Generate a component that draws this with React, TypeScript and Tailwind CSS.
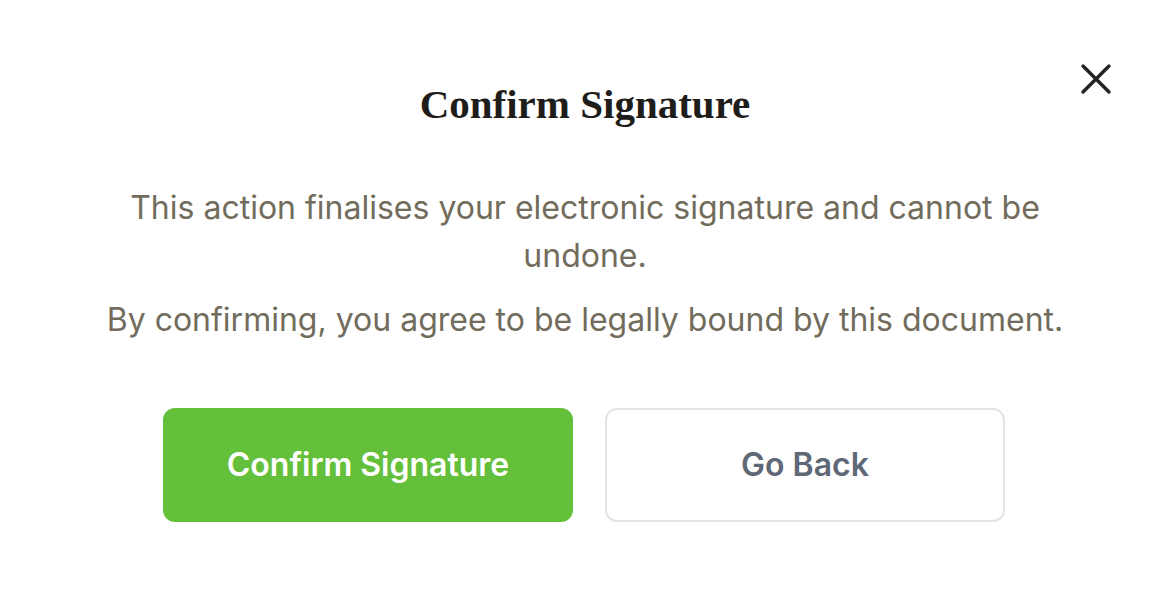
import { useState } from "react";

const CloseIcon = () => (
  <svg width="32" height="32" viewBox="0 0 32 32" fill="none">
    <path
      d="M3 3L29 29M29 3L3 29"
      stroke="#222222"
      strokeWidth="3.4"
      strokeLinecap="round"
    />
  </svg>
);

const App = () => {
  const [open, setOpen] = useState(true);

  return (
    <div className="relative w-full h-[592px] bg-white font-['Inter','Noto_Sans',sans-serif]">
      {/* Close button */}
      <button
        onClick={() => setOpen(false)}
        className="absolute top-[63px] right-[58px] p-0"
        aria-label="Close"
      >
        <CloseIcon />
      </button>

      <div className="flex flex-col items-center pt-[82px]">
        <h2 className="text-[41px] leading-[44px] font-bold text-[#1f1d1a] font-['Liberation_Serif','DejaVu_Serif',serif]">
          Confirm Signature
        </h2>

        {/* Body copy */}
        <div className="mt-[58px] flex flex-col gap-4 text-center text-[32px] leading-[48px] text-[#716c5c]">
          <p className="max-w-[960px]">
            This action finalises your electronic signature and cannot be undone.
          </p>
          <p>By confirming, you agree to be legally bound by this document.</p>
        </div>

        {/* Actions */}
        <div className="mt-[64px] flex gap-8 pr-[2px]">
          <button
            disabled={!open}
            className="w-[410px] h-[114px] rounded-xl bg-[#64bf3b] text-white text-[32px] font-semibold"
          >
            Confirm Signature
          </button>
          <button className="w-[400px] h-[114px] rounded-xl border-2 border-[#e3e4e8] bg-white text-[#5e6877] text-[32px] font-semibold">
            Go Back
          </button>
        </div>
      </div>
    </div>
  );
};

export default App;
